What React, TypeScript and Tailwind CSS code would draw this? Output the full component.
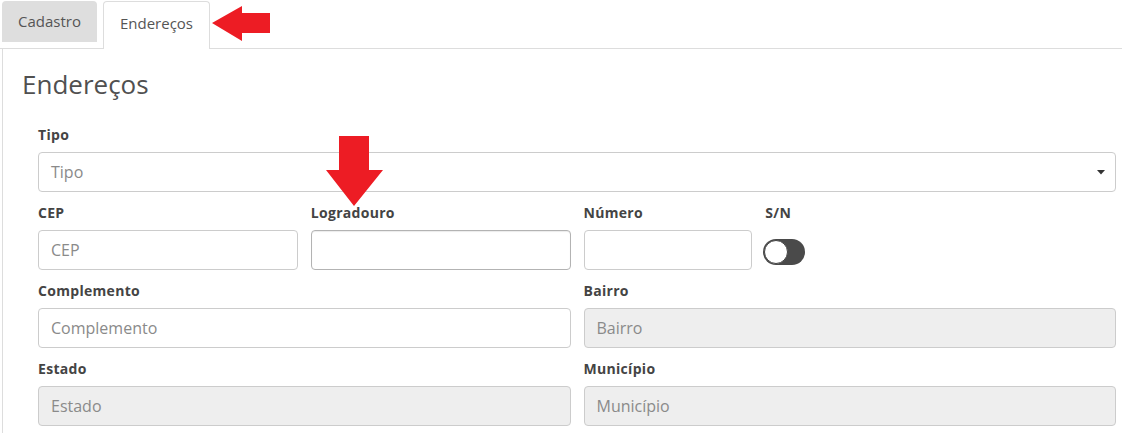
import React from "react";

function Label({ children }: { children: React.ReactNode }) {
  return (
    <div className="h-[18px] leading-[18px] text-[14px] tracking-[0.3px] font-bold text-[#444] mb-[8px]">
      {children}
    </div>
  );
}

function Input({ placeholder, disabled, active }: { placeholder?: string; disabled?: boolean; active?: boolean }) {
  return (
    <div
      className={
        "h-[40px] rounded-[4px] border px-[12px] flex items-center text-[16px] text-[#8a8a8a] " +
        (active ? "border-[#b3b3b3] shadow-[inset_0_1px_1px_rgba(0,0,0,0.08)] " : "border-[#cccccc] ") +
        (disabled ? "bg-[#eeeeee]" : "bg-white")
      }
    >
      {placeholder}
    </div>
  );
}

export default function App() {
  return (
    <div className="relative w-[1122px] h-[433px] bg-white overflow-hidden font-['Open_Sans',sans-serif] text-[#555]">
      {/* Tabs */}
      <div className="flex items-start h-[49px] border-b border-[#dddddd]">
        <div className="ml-[2px] mt-[1px] h-[41px] w-[95px] rounded-t-[4px] bg-[#dedede] flex items-center justify-center text-[15px] text-[#555]">
          Cadastro
        </div>
        <div className="relative z-10 ml-[6px] mt-[1px] h-[48px] w-[107px] rounded-t-[4px] border border-b-0 border-[#dddddd] bg-white flex justify-center pt-[10px] text-[15px] text-[#555]">
          Endereços
        </div>
      </div>

      {/* left arrow */}
      <svg className="absolute left-[212px] top-[6px]" width="60" height="36" viewBox="0 0 60 36">
        <polygon points="0,17 30,0 30,7 58,7 58,27 30,27 30,35" fill="#ed1c24" />
      </svg>

      {/* Panel */}
      <div className="ml-[2px] border-l border-[#dddddd] h-[384px] pl-[19px] pr-[6px]">
        <div className="pt-[20px] text-[26px] leading-[30px] font-normal text-[#505050]">Endereços</div>
        <div className="ml-[16px] mt-[27px]">
          <div className="mb-[12px]">
            <Label>Tipo</Label>
            <div className="relative h-[40px] rounded-[4px] border border-[#cccccc] px-[12px] flex items-center text-[16px] text-[#8a8a8a] bg-white">
              Tipo
              <svg className="absolute right-[10px] top-[17px]" width="8" height="5" viewBox="0 0 8 5">
                <polygon points="0,0 8,0 4,4.5" fill="#333" />
              </svg>
            </div>
          </div>
          <div className="grid grid-cols-12 gap-x-[13px] gap-y-[12px]">
            <div className="col-span-3">
              <Label>CEP</Label>
              <Input placeholder="CEP" />
            </div>
            <div className="col-span-3">
              <Label>Logradouro</Label>
              <Input active />
            </div>
            <div className="col-span-2">
              <Label>Número</Label>
              <Input />
            </div>
            <div className="col-span-1">
              <Label>S/N</Label>
              <div className="mt-[17px] -ml-[2px] w-[42px] h-[26px] rounded-full bg-[#4a4a4a] relative">
                <div className="absolute left-[1px] top-[1px] w-[24px] h-[24px] rounded-full bg-white border border-[#444]"></div>
              </div>
            </div>
            <div className="col-span-3"></div>
            <div className="col-span-6">
              <Label>Complemento</Label>
              <Input placeholder="Complemento" />
            </div>
            <div className="col-span-6">
              <Label>Bairro</Label>
              <Input placeholder="Bairro" disabled />
            </div>
            <div className="col-span-6">
              <Label>Estado</Label>
              <Input placeholder="Estado" disabled />
            </div>
            <div className="col-span-6">
              <Label>Município</Label>
              <Input placeholder="Município" disabled />
            </div>
          </div>
        </div>
      </div>

      {/* down arrow */}
      <svg className="absolute left-[326px] top-[136px]" width="58" height="72" viewBox="0 0 58 72">
        <polygon points="13,0 43,0 43,34 57,34 28,70 0,34 13,34" fill="#ed1c24" />
      </svg>
    </div>
  );
}
